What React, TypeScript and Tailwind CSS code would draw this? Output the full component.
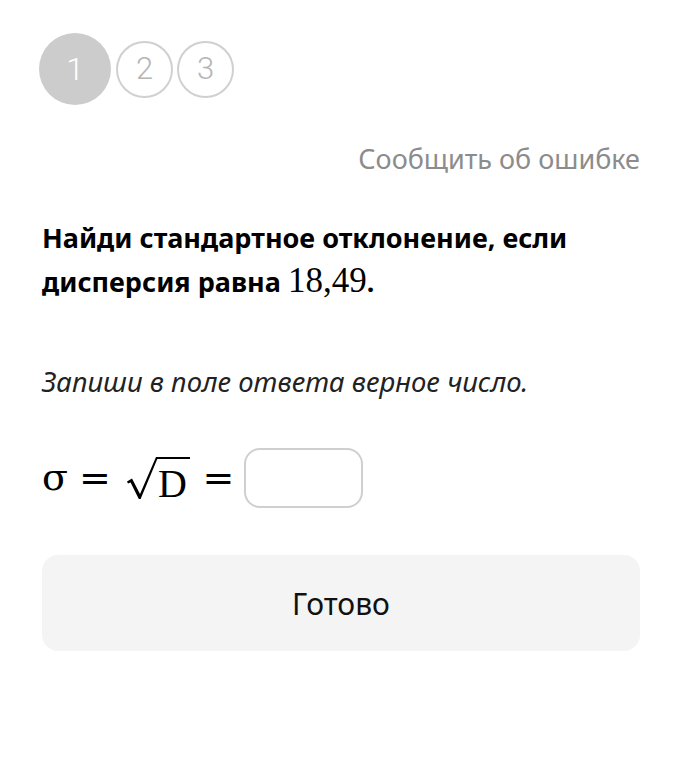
import { FC } from 'react';

const Step: FC<{ n: number; active?: boolean }> = ({ n, active }) =>
  active ? (
    <div className="w-[72px] h-[72px] rounded-full bg-[#cccccc] flex items-center justify-center text-white text-[32px] font-light font-['Roboto',sans-serif]">
      {n}
    </div>
  ) : (
    <div className="w-[57px] h-[57px] rounded-full border-2 border-[#d0d0d0] flex items-center justify-center text-[#b5b5b5] text-[31px] font-light font-['Roboto',sans-serif]">
      {n}
    </div>
  );

// radical sign, the bar continues over the radicand as a border
const Radical: FC = () => (
  <svg width="31" height="42" viewBox="0 0 31 42" className="block shrink-0">
    <path d="M0 24.5 L5 21.5 L13 37 L29 0 H31 V2 H30.3 L13.6 42 H11.8 L3.6 25.4 L1 26.5 Z" fill="#000" />
  </svg>
);

const App: FC = () => {
  return (
    <div className="w-[683px] min-h-[763px] bg-white pl-[42px] pr-[43px] pt-[33px] font-['Noto_Sans',sans-serif] text-black">
      <div className="flex items-center -ml-[3px] h-[72px]">
        <Step n={1} active />
        <div className="ml-[5px]">
          <Step n={2} />
        </div>
        <div className="ml-[4px]">
          <Step n={3} />
        </div>
      </div>

      <div className="mt-[36px] text-right text-[27px] leading-[36px] text-[#8c8c8c]">
        Сообщить об ошибке
      </div>

      <div className="mt-[39px] text-[27px] leading-[44px] font-bold">
        Найди стандартное отклонение, если дисперсия равна{' '}
        <span className="font-['Liberation_Serif',serif] font-normal text-[35px] leading-none">18,49</span>.
      </div>

      <div className="mt-[60px] text-[27.5px] leading-[36px] italic text-[#222]">
        Запиши в поле ответа верное число.
      </div>

      <div className="mt-[48px] flex items-center h-[60px] font-['DejaVu_Serif',serif] text-[38px] leading-none">
        <span className="w-[26px] flex justify-center text-[38px] -mt-[2px]">σ</span>
        <span className="ml-[14px] w-[26px] flex justify-center">=</span>
        <span className="ml-[19px] flex items-start">
          <Radical />
          <span className="w-[32px] border-t-2 border-black pt-[9px] font-['Liberation_Serif',serif] text-[40px] leading-[32px]">
            D
          </span>
        </span>
        <span className="ml-[15px] w-[27px] flex justify-center">=</span>
        <div className="ml-[12px] w-[119px] h-[60px] rounded-[16px] border-2 border-[#cfcfcf]" />
      </div>

      <button className="mt-[47px] w-full h-[96px] rounded-[16px] bg-[#f4f4f4] text-[30px] text-[#111] flex items-center justify-center">
        Готово
      </button>
    </div>
  );
};

export default App;
